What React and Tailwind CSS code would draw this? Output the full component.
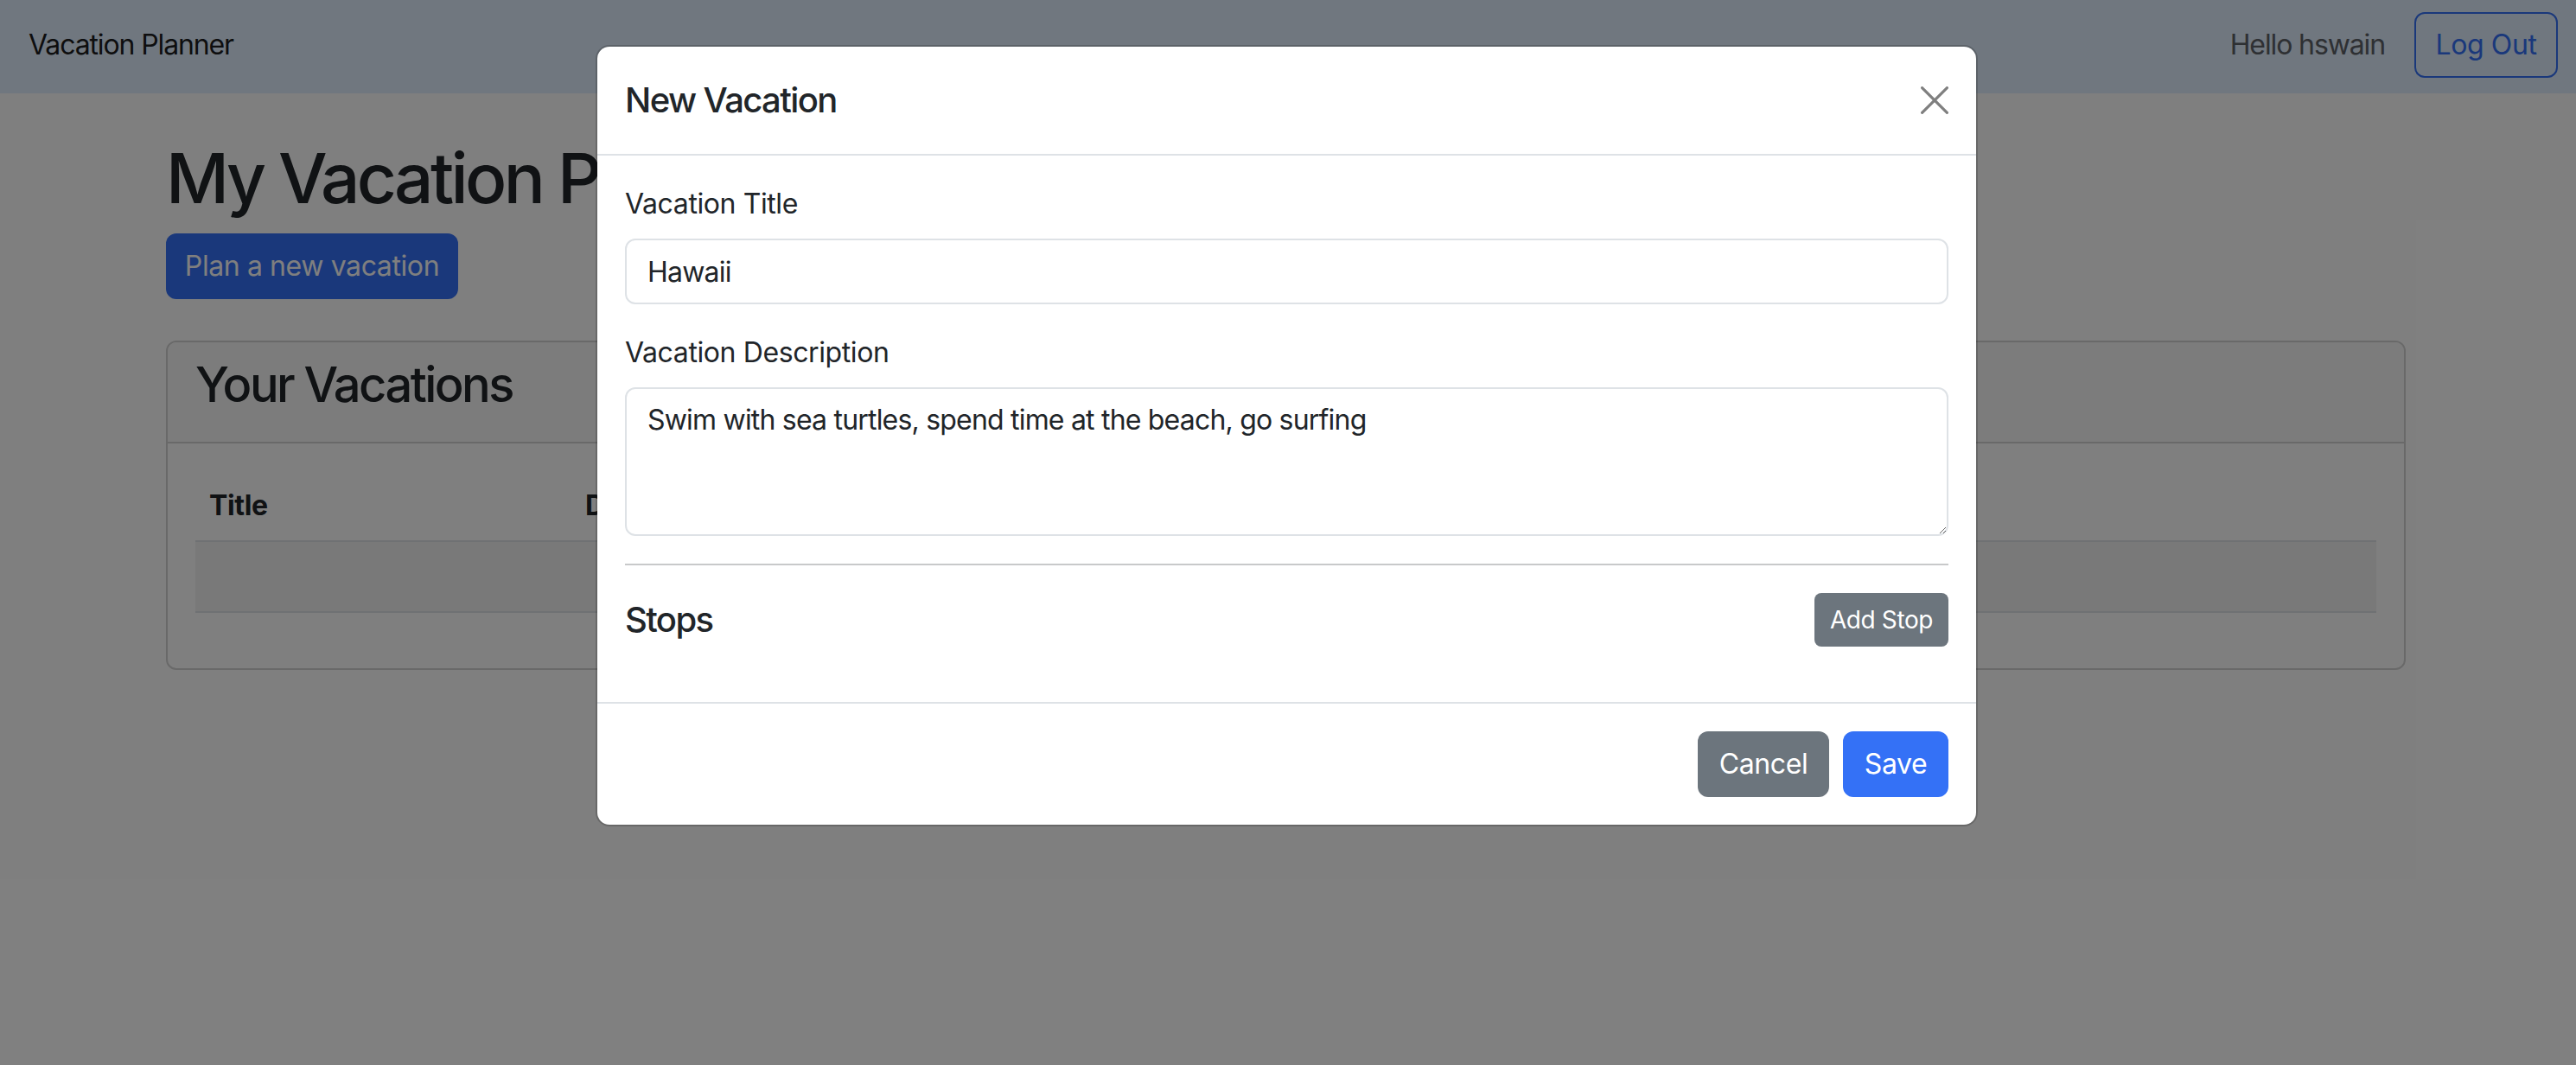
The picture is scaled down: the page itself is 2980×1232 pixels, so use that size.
export default function App() {
  return (
    <div className="relative h-[1232px] w-full overflow-hidden bg-white font-[Inter,sans-serif] tracking-[-0.025em] text-[#212529]">
      {/* Navbar */}
      <nav className="flex h-[108px] items-center justify-between bg-[#e0eeff] pb-[4px] pl-[33px] pr-[21px]">
        <span className="text-[32px] leading-[48px] tracking-[-0.035em] text-black/90">Vacation Planner</span>
        <div className="flex items-center gap-[34px]">
          <span className="text-[32px] leading-[48px] tracking-[-0.035em] text-[#5c6066]">Hello hswain</span>
          <button className="h-[76px] w-[166px] rounded-[12px] border-2 border-[#3471f6] text-[32px] leading-[48px] text-[#3471f6]">
            Log Out
          </button>
        </div>
      </nav>

      {/* Main */}
      <main className="ml-[192px] w-[2591px] pt-[50px]">
        <h1 className="mb-[16px] text-[80px] font-medium leading-[96px] tracking-[-0.045em]">My Vacation Plans</h1>
        <button className="h-[76px] w-[338px] rounded-[12px] bg-[#3471f6] text-[32px] leading-[48px] text-white">
          Plan a new vacation
        </button>

        <div className="mt-[48px] rounded-[12px] border-2 border-[#d3d3d3]">
          <div className="rounded-t-[10px] border-b-2 border-[#d3d3d3] bg-[#f8f8f8] px-[32px] pb-[16px] pt-[16px]">
            <h3 className="mb-[16px] text-[56px] font-medium leading-[67px] tracking-[-0.045em]">Your Vacations</h3>
          </div>
          <div className="p-[32px]">
            <table className="mb-[32px] w-full border-collapse text-left">
              <thead>
                <tr className="border-b-2 border-[#dee2e6]">
                  <th className="w-[435px] px-[16px] py-[16px] text-[32px] font-bold leading-[48px]">Title</th>
                  <th className="px-[16px] py-[16px] text-[32px] font-bold leading-[48px]">Description</th>
                  <th className="px-[16px] py-[16px] text-[32px] font-bold leading-[48px]">Stops</th>
                </tr>
              </thead>
              <tbody>
                <tr className="border-b-2 border-[#dee2e6] bg-black/[0.05]">
                  <td className="px-[16px] py-[16px] text-[32px] leading-[48px]">{"\u00a0"}</td>
                  <td className="px-[16px] py-[16px] text-[32px] leading-[48px]">{"\u00a0"}</td>
                  <td className="px-[16px] py-[16px] text-[32px] leading-[48px]">{"\u00a0"}</td>
                </tr>
              </tbody>
            </table>
          </div>
        </div>
      </main>

      {/* Backdrop */}
      <div className="absolute inset-0 bg-black/50" />

      {/* Modal */}
      <div className="absolute left-[689px] top-[52px] w-[1599px] rounded-[16px] border-2 border-black/[0.175] bg-white bg-clip-padding">
        <div className="flex items-center justify-between border-b-2 border-[#dee2e6] p-[32px]">
          <h5 className="text-[40px] font-medium leading-[60px] tracking-[-0.04em]">New Vacation</h5>
          <svg width="32" height="32" viewBox="0 0 32 32">
            <path d="M1.6 1.6 L30.4 30.4 M30.4 1.6 L1.6 30.4" stroke="#7f7f7f" strokeWidth="3.2" strokeLinecap="round" fill="none" />
          </svg>
        </div>

        <div className="px-[32px] pt-[32px] pb-[32px]">
          <label className="mb-[16px] block text-[32px] leading-[48px]">Vacation Title</label>
          <input
            type="text"
            defaultValue="Hawaii"
            className="mb-[32px] block h-[76px] w-full rounded-[12px] border-2 border-[#dee2e6] px-[24px] text-[32px] leading-[48px] tracking-[-0.025em] text-[#212529] outline-none"
          />
          <label className="mb-[16px] block text-[32px] leading-[48px]">Vacation Description</label>
          <textarea
            defaultValue="Swim with sea turtles, spend time at the beach, go surfing"
            className="mb-[32px] block h-[172px] w-full rounded-[12px] border-2 border-[#dee2e6] px-[24px] py-[12px] text-[32px] leading-[48px] tracking-[-0.025em] text-[#212529] outline-none"
          />
          <hr className="my-[32px] border-0 border-t-2 border-[#c8c9ca]" />
          <div className="mb-[32px] flex items-center justify-between">
            <h5 className="text-[40px] font-medium leading-[48px] tracking-[-0.04em]">Stops</h5>
            <button className="h-[62px] w-[155px] rounded-[8px] bg-[#6c757d] text-[28px] leading-[42px] text-white">
              Add Stop
            </button>
          </div>
        </div>

        <div className="flex justify-end gap-[16px] border-t-2 border-[#dee2e6] p-[32px]">
          <button className="h-[76px] w-[152px] rounded-[12px] bg-[#6c757d] text-[32px] leading-[48px] text-white">Cancel</button>
          <button className="h-[76px] w-[122px] rounded-[12px] bg-[#3471f6] text-[32px] leading-[48px] text-white">Save</button>
        </div>
      </div>
    </div>
  );
}
